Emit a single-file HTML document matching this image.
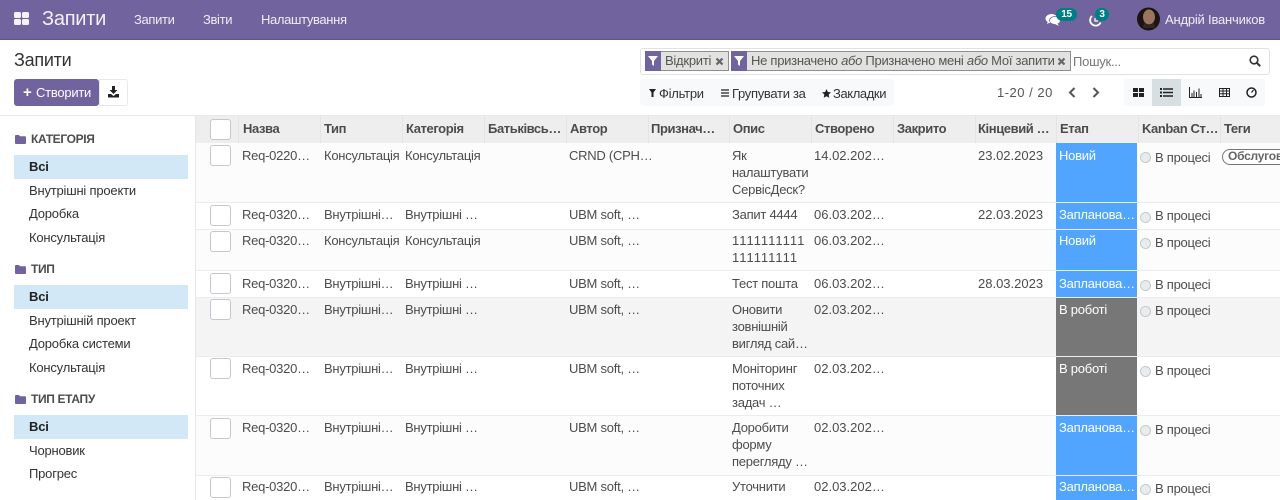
<!DOCTYPE html>
<html><head><meta charset="utf-8"><style>
html,body{margin:0;padding:0;width:1280px;height:500px;overflow:hidden;background:#fff;font-family:"Liberation Sans","DejaVu Sans",sans-serif;font-size:13px;color:#4c4c4c;letter-spacing:-.25px}
div,span.a,svg{position:absolute}
.t{white-space:nowrap;line-height:17px}
.nav{color:#f0edf3;top:11px;font-size:13px;letter-spacing:-.35px}
.h{top:120px;font-weight:bold;color:#4c4c4c;font-size:13px;letter-spacing:-.4px}
.hc{top:116px;width:1px;height:27px;background:#e4e4e4}
.cb{left:210px;width:19px;height:19px;background:#fff;border:1px solid #c4c8cc;border-radius:3px}
.rl{left:196px;width:1084px;height:1px;background:#ececec}
.s{left:29px;color:#333;margin-top:-1px;letter-spacing:-.2px}
.sa{left:14px;width:174px;height:24px;background:#d2e8f6}
.sh{left:31px;font-weight:bold;color:#4c4c4c;font-size:12px;letter-spacing:-.35px}
.st{left:1056px;width:81px;color:#fff;padding-left:3px;box-sizing:border-box;line-height:17px;white-space:nowrap}
.r{left:1140px;width:9px;height:9px;border:1px solid #c8c8c8;background:#e9ecef;border-radius:50%}
.ic{fill:#222}
.d{left:814px;letter-spacing:0}
.e{left:978px;letter-spacing:0}
</style></head><body>
<div style="left:0;top:0;width:1280px;height:39px;background:#71639e;border-bottom:1px solid #5f5388"></div>
<div style="left:14px;top:12px;width:7px;height:6px;background:#f4f2f7;border-radius:1.5px"></div>
<div style="left:22px;top:12px;width:7px;height:6px;background:#f4f2f7;border-radius:1.5px"></div>
<div style="left:14px;top:19px;width:7px;height:6px;background:#f4f2f7;border-radius:1.5px"></div>
<div style="left:22px;top:19px;width:7px;height:6px;background:#f4f2f7;border-radius:1.5px"></div>
<div class="t" style="left:42px;top:8px;font-size:20px;line-height:23px;color:#f4f2f7">Запити</div>
<div class="t nav" style="left:134px">Запити</div>
<div class="t nav" style="left:203px">Звіти</div>
<div class="t nav" style="left:261px">Налаштування</div>
<svg style="left:1045px;top:13px" width="16" height="14" viewBox="0 0 16 14"><ellipse cx="6.5" cy="5.5" rx="6" ry="4.5" fill="#fff"/><ellipse cx="10" cy="7.5" rx="5.5" ry="4" fill="#fff" stroke="#71639e" stroke-width=".8"/><path d="M3 8l-1 3 4-2zM12 10l2 3-4-2z" fill="#fff"/></svg>
<div class="t" style="left:1056px;top:8px;width:21px;height:13px;background:#017e84;border-radius:7px;color:#fff;font-size:10px;font-weight:bold;text-align:center;line-height:13px">15</div>
<svg style="left:1088px;top:13px" width="15" height="15" viewBox="0 0 15 15"><path d="M4 3A5.5 5.5 0 1 0 12.6 9.5" fill="none" stroke="#fff" stroke-width="1.8"/><path d="M7 5v3h3" fill="none" stroke="#fff" stroke-width="1.2"/></svg>
<div class="t" style="left:1095px;top:8px;width:14px;height:13px;background:#017e84;border-radius:7px;color:#fff;font-size:10px;font-weight:bold;text-align:center;line-height:13px">3</div>
<svg style="left:1137px;top:7px" width="23" height="24" viewBox="0 0 23 24"><circle cx="11.5" cy="12" r="11.5" fill="#1c1411"/><ellipse cx="12" cy="10" rx="6" ry="7.5" fill="#9a7660"/><path d="M7 15q5 6 10 0l1 6-12 0z" fill="#33261f"/></svg>
<div class="t nav" style="left:1165px;letter-spacing:-.2px">Андрій Іванчиков</div>

<div style="left:0;top:40px;width:1280px;height:76px;background:#fff;border-bottom:1px solid #e6e8ea;box-sizing:border-box"></div>
<div class="t" style="left:14px;top:50px;font-size:18px;line-height:21px;color:#333">Запити</div>
<div style="left:14px;top:79px;width:85px;height:27px;background:#71639e;border-radius:3px"></div>
<div class="t" style="left:23px;top:84px;color:#fff;font-weight:bold;font-size:15px">+</div>
<div class="t" style="left:36px;top:84px;color:#fff;font-size:13px">Створити</div>
<div style="left:99px;top:79px;width:27px;height:25px;border:1px solid #e6e8ea;border-radius:0 3px 3px 0;background:#fff"></div>
<svg style="left:107px;top:86px" width="13" height="12" viewBox="0 0 13 12"><path class="ic" d="M5 0h3v4h2.500L6.500 8 2.500 4H5z"/><path class="ic" d="M1 8h3l2.500 2L9 8h3v3.500H1z"/></svg>

<div style="left:640px;top:48px;width:628px;height:25px;border:1px solid #dee2e6;border-radius:3px;background:#fff"></div>
<div style="left:645px;top:51px;width:84px;height:20px;background:#e2e2e0;border:1px solid #8f8f8f;box-sizing:border-box"></div>
<div style="left:645px;top:51px;width:16px;height:20px;background:#71639e"></div>
<svg style="left:648px;top:56px" width="10" height="10" viewBox="0 0 10 10"><path d="M0 0h10L6 5v5L4 8.500V5z" fill="#fff"/></svg>
<div class="t" style="left:665px;top:52px;color:#555">Відкриті</div>
<svg style="left:715px;top:57px" width="9" height="9" viewBox="0 0 9 9"><path d="M1.500 1.500l6 6M7.500 1.500l-6 6" stroke="#666" stroke-width="2.200"/></svg>
<div style="left:731px;top:51px;width:340px;height:20px;background:#e2e2e0;border:1px solid #8f8f8f;box-sizing:border-box"></div>
<div style="left:731px;top:51px;width:16px;height:20px;background:#71639e"></div>
<svg style="left:734px;top:56px" width="10" height="10" viewBox="0 0 10 10"><path d="M0 0h10L6 5v5L4 8.500V5z" fill="#fff"/></svg>
<div class="t" style="left:751px;top:52px;color:#555;letter-spacing:-.27px">Не призначено <i>або</i> Призначено мені <i>або</i> Мої запити</div>
<svg style="left:1057px;top:57px" width="9" height="9" viewBox="0 0 9 9"><path d="M1.500 1.500l6 6M7.500 1.500l-6 6" stroke="#666" stroke-width="2.200"/></svg>
<div class="t" style="left:1073px;top:53px;color:#777">Пошук...</div>
<svg style="left:1249px;top:55px" width="12" height="12" viewBox="0 0 12 12"><circle cx="5" cy="5" r="3.800" fill="none" stroke="#333" stroke-width="1.600"/><path d="M8 8l3.200 3.200" stroke="#333" stroke-width="2"/></svg>

<div style="left:640px;top:79px;width:254px;height:27px;background:#f8f9fa;border-radius:3px"></div>
<svg style="left:649px;top:89px" width="7" height="8" viewBox="0 0 7 8"><path class="ic" d="M0 0h7L4.500 3.500V8h-2V3.500z"/></svg>
<div class="t" style="left:659px;top:85px;color:#333">Фільтри</div>
<svg style="left:721px;top:89px" width="8" height="8" viewBox="0 0 8 8"><path d="M0 1h8M0 4h8M0 7h8" stroke="#222" stroke-width="1.200"/></svg>
<div class="t" style="left:732px;top:85px;color:#333;letter-spacing:-.3px">Групувати за</div>
<svg style="left:822px;top:89px" width="9" height="9" viewBox="0 0 10 10"><path class="ic" d="M5 0l1.500 3.300 3.500.4-2.600 2.400.7 3.600L5 8 1.900 9.700l.7-3.600L0 3.700l3.500-.4z"/></svg>
<div class="t" style="left:833px;top:85px;color:#333;letter-spacing:-.4px">Закладки</div>
<div class="t" style="left:997px;top:84px;color:#555;letter-spacing:.5px">1-20 / 20</div>
<svg style="left:1068px;top:87px" width="8" height="11" viewBox="0 0 8 11"><path d="M6.500 1L2 5.500 6.500 10" fill="none" stroke="#555" stroke-width="2"/></svg>
<svg style="left:1092px;top:87px" width="8" height="11" viewBox="0 0 8 11"><path d="M1.500 1L6 5.500 1.500 10" fill="none" stroke="#555" stroke-width="2"/></svg>
<div style="left:1124px;top:79px;width:141px;height:27px;background:#f8f9fa;border-radius:3px"></div>
<div style="left:1152px;top:79px;width:29px;height:27px;background:#d8dfe3"></div>
<svg style="left:1133px;top:88px" width="11" height="9" viewBox="0 0 11 9"><path class="ic" d="M0 0h5v4H0zM6 0h5v4H6zM0 5h5v4H0zM6 5h5v4H6z"/></svg>
<svg style="left:1160px;top:88px" width="13" height="9" viewBox="0 0 13 9"><path class="ic" d="M0 0h2v2H0zM3 .3h10v1.400H3zM0 3.500h2v2H0zM3 3.800h10v1.400H3zM0 7h2v2H0zM3 7.300h10v1.400H3z"/></svg>
<svg style="left:1189px;top:87px" width="13" height="11" viewBox="0 0 13 11"><path d="M.5 0v10.500H13M3 10V6M5 10V3.500M7.500 10V5M10 10V1.500M12 10V7" fill="none" stroke="#222"/></svg>
<svg style="left:1219px;top:88px" width="11" height="9" viewBox="0 0 11 9"><path d="M.5.500h10v8H.5zM.5 3h10M.5 5.700h10M4 .5v8M7.500 .5v8" fill="none" stroke="#222"/></svg>
<svg style="left:1246px;top:87px" width="11" height="11" viewBox="0 0 11 11"><circle cx="5.500" cy="5.500" r="4.500" fill="none" stroke="#222" stroke-width="1.500"/><path d="M5.500 5.500L7.500 3" stroke="#222" stroke-width="1.200"/></svg>

<div style="left:195px;top:116px;width:1px;height:384px;background:#e6e8ea"></div>
<svg style="left:15px;top:135px" width="11" height="9" viewBox="0 0 11 9"><path d="M0 1q0-1 1-1h3l1 1.300h5q1 0 1 1V8q0 1-1 1H1Q0 9 0 8z" fill="#71639e"/></svg>
<div class="t sh" style="top:131px">КАТЕГОРІЯ</div>
<div class="sa" style="top:155px"></div><div class="t s" style="top:159px;font-weight:bold;color:#222">Всі</div>
<div class="t s" style="top:183px">Внутрішні проекти</div>
<div class="t s" style="top:206px">Доробка</div>
<div class="t s" style="top:230px">Консультація</div>
<svg style="left:15px;top:265px" width="11" height="9" viewBox="0 0 11 9"><path d="M0 1q0-1 1-1h3l1 1.300h5q1 0 1 1V8q0 1-1 1H1Q0 9 0 8z" fill="#71639e"/></svg>
<div class="t sh" style="top:261px">ТИП</div>
<div class="sa" style="top:285px"></div><div class="t s" style="top:289px;font-weight:bold;color:#222">Всі</div>
<div class="t s" style="top:313px">Внутрішній проект</div>
<div class="t s" style="top:336px">Доробка системи</div>
<div class="t s" style="top:360px">Консультація</div>
<svg style="left:15px;top:395px" width="11" height="9" viewBox="0 0 11 9"><path d="M0 1q0-1 1-1h3l1 1.300h5q1 0 1 1V8q0 1-1 1H1Q0 9 0 8z" fill="#71639e"/></svg>
<div class="t sh" style="top:391px">ТИП ЕТАПУ</div>
<div class="sa" style="top:415px"></div><div class="t s" style="top:419px;font-weight:bold;color:#222">Всі</div>
<div class="t s" style="top:443px">Чорновик</div>
<div class="t s" style="top:466px">Прогрес</div>

<div style="left:196px;top:116px;width:1084px;height:27px;background:#eeeeee"></div>
<div style="left:196px;top:143px;width:1084px;height:59px;background:#fcfcfc"></div>
<div style="left:196px;top:230px;width:1084px;height:40px;background:#fcfcfc"></div>
<div style="left:196px;top:298px;width:1084px;height:58px;background:#f4f4f4"></div>
<div style="left:196px;top:416px;width:1084px;height:59px;background:#fcfcfc"></div>
<div class="rl" style="top:202px"></div><div class="rl" style="top:229px"></div><div class="rl" style="top:270px"></div><div class="rl" style="top:297px"></div><div class="rl" style="top:356px"></div><div class="rl" style="top:415px"></div><div class="rl" style="top:475px"></div>
<div class="hc" style="left:238px"></div><div class="hc" style="left:320px"></div><div class="hc" style="left:402px"></div><div class="hc" style="left:484px"></div><div class="hc" style="left:566px"></div><div class="hc" style="left:648px"></div><div class="hc" style="left:729px"></div><div class="hc" style="left:811px"></div><div class="hc" style="left:893px"></div><div class="hc" style="left:975px"></div><div class="hc" style="left:1056px"></div><div class="hc" style="left:1138px"></div><div class="hc" style="left:1220px"></div>
<div class="cb" style="top:119px"></div>
<div class="t h" style="left:243px">Назва</div><div class="t h" style="left:324px">Тип</div><div class="t h" style="left:406px">Категорія</div><div class="t h" style="left:488px">Батьківсь…</div><div class="t h" style="left:570px">Автор</div><div class="t h" style="left:651px">Признач…</div><div class="t h" style="left:733px">Опис</div><div class="t h" style="left:815px">Створено</div><div class="t h" style="left:897px">Закрито</div><div class="t h" style="left:978px">Кінцевий …</div><div class="t h" style="left:1060px">Етап</div><div class="t h" style="left:1142px">Kanban Ст…</div><div class="t h" style="left:1224px">Теги</div>

<div class="cb" style="top:145px"></div><div class="cb" style="top:205px"></div><div class="cb" style="top:231px"></div><div class="cb" style="top:273px"></div><div class="cb" style="top:299px"></div><div class="cb" style="top:358px"></div><div class="cb" style="top:418px"></div><div class="cb" style="top:477px"></div>

<div class="t" style="left:242px;top:147px">Req-0220…</div><div class="t" style="left:324px;top:147px">Консультація</div><div class="t" style="left:405px;top:147px">Консультація</div><div class="t" style="left:569px;top:147px">CRND (CPH…</div><div class="t" style="left:732px;top:147px">Як<br>налаштувати<br>СервісДеск?</div><div class="t d" style="top:147px">14.02.202…</div><div class="t e" style="top:147px">23.02.2023</div>

<div class="t" style="left:242px;top:206px">Req-0320…</div><div class="t" style="left:324px;top:206px">Внутрішні…</div><div class="t" style="left:405px;top:206px">Внутрішні …</div><div class="t" style="left:569px;top:206px">UBM soft, …</div><div class="t" style="left:732px;top:206px">Запит 4444</div><div class="t d" style="top:206px">06.03.202…</div><div class="t e" style="top:206px">22.03.2023</div>

<div class="t" style="left:242px;top:232px">Req-0320…</div><div class="t" style="left:324px;top:232px">Консультація</div><div class="t" style="left:405px;top:232px">Консультація</div><div class="t" style="left:569px;top:232px">UBM soft, …</div><div class="t" style="left:732px;top:232px;font-kerning:none;letter-spacing:0">1111111111<br>111111111</div><div class="t d" style="top:232px">06.03.202…</div>

<div class="t" style="left:242px;top:275px">Req-0320…</div><div class="t" style="left:324px;top:275px">Внутрішні…</div><div class="t" style="left:405px;top:275px">Внутрішні …</div><div class="t" style="left:569px;top:275px">UBM soft, …</div><div class="t" style="left:732px;top:275px">Тест пошта</div><div class="t d" style="top:275px">06.03.202…</div><div class="t e" style="top:275px">28.03.2023</div>

<div class="t" style="left:242px;top:301px">Req-0320…</div><div class="t" style="left:324px;top:301px">Внутрішні…</div><div class="t" style="left:405px;top:301px">Внутрішні …</div><div class="t" style="left:569px;top:301px">UBM soft, …</div><div class="t" style="left:732px;top:301px">Оновити<br>зовнішній<br>вигляд сай…</div><div class="t d" style="top:301px">02.03.202…</div>

<div class="t" style="left:242px;top:360px">Req-0320…</div><div class="t" style="left:324px;top:360px">Внутрішні…</div><div class="t" style="left:405px;top:360px">Внутрішні …</div><div class="t" style="left:569px;top:360px">UBM soft, …</div><div class="t" style="left:732px;top:360px">Моніторинг<br>поточних<br>задач …</div><div class="t d" style="top:360px">02.03.202…</div>

<div class="t" style="left:242px;top:419px">Req-0320…</div><div class="t" style="left:324px;top:419px">Внутрішні…</div><div class="t" style="left:405px;top:419px">Внутрішні …</div><div class="t" style="left:569px;top:419px">UBM soft, …</div><div class="t" style="left:732px;top:419px">Доробити<br>форму<br>перегляду …</div><div class="t d" style="top:419px">02.03.202…</div>

<div class="t" style="left:242px;top:478px">Req-0320…</div><div class="t" style="left:324px;top:478px">Внутрішні…</div><div class="t" style="left:405px;top:478px">Внутрішні …</div><div class="t" style="left:569px;top:478px">UBM soft, …</div><div class="t" style="left:732px;top:478px">Уточнити</div><div class="t d" style="top:478px">02.03.202…</div>

<div class="st" style="top:143px;height:59px;background:#52a5fe;padding-top:4px">Новий</div>
<div class="st" style="top:203px;height:26px;background:#52a5fe;padding-top:3px">Запланова…</div>
<div class="st" style="top:230px;height:40px;background:#52a5fe;padding-top:2px">Новий</div>
<div class="st" style="top:271px;height:26px;background:#52a5fe;padding-top:4px">Запланова…</div>
<div class="st" style="top:298px;height:58px;background:#777;padding-top:3px">В роботі</div>
<div class="st" style="top:357px;height:58px;background:#777;padding-top:3px">В роботі</div>
<div class="st" style="top:416px;height:59px;background:#52a5fe;padding-top:3px">Запланова…</div>
<div class="st" style="top:476px;height:24px;background:#52a5fe;padding-top:2px">Запланова…</div>

<div class="r" style="top:152px"></div><div class="t" style="left:1155px;top:149px">В процесі</div>
<div class="r" style="top:212px"></div><div class="t" style="left:1155px;top:207px">В процесі</div>
<div class="r" style="top:238px"></div><div class="t" style="left:1155px;top:234px">В процесі</div>
<div class="r" style="top:280px"></div><div class="t" style="left:1155px;top:276px">В процесі</div>
<div class="r" style="top:306px"></div><div class="t" style="left:1155px;top:302px">В процесі</div>
<div class="r" style="top:366px"></div><div class="t" style="left:1155px;top:362px">В процесі</div>
<div class="r" style="top:425px"></div><div class="t" style="left:1155px;top:421px">В процесі</div>
<div class="r" style="top:484px"></div><div class="t" style="left:1155px;top:480px">В процесі</div>

<div style="left:1222px;top:149px;width:70px;height:14px;border:1px solid #777;border-radius:8px;background:#fff"></div>
<div class="t" style="left:1228px;top:148px;font-size:12px;font-weight:bold;color:#666">Обслугов</div>
</body></html>
